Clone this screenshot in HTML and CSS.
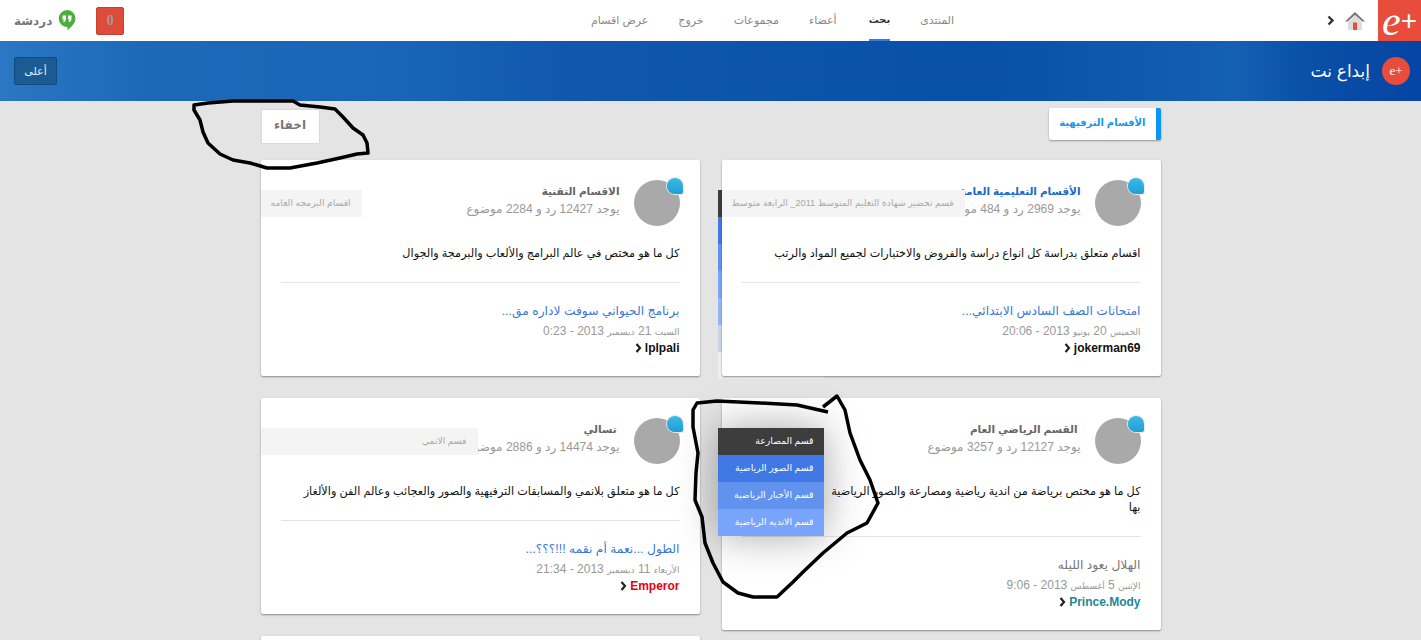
FILE: index.html
```html
<!DOCTYPE html>
<html lang="ar" dir="rtl">
<head>
  <meta charset="utf-8">
  <title>إبداع نت</title>
  <link rel="stylesheet" href="styles.css">
</head>
<body>
  <div class="topbar">
    <div class="top-start">
      <div class="logo"><span class="logo-e">e</span><span class="logo-plus">+</span></div>
      <svg class="home-icon" width="22" height="20" viewBox="0 0 22 20">
        <path d="M11 1 L21 10.5 L18.5 10.5 L11 4 L3.5 10.5 L1 10.5 Z" fill="#777"/>
        <path d="M4 10.5 L11 4.5 L18 10.5 V19 H4 Z" fill="#ddd"/>
        <rect x="9" y="11.500" width="4" height="7.500" fill="#e84c3a"/>
      </svg>
      <svg class="back-icon" width="8" height="11" viewBox="0 0 8 11">
        <path d="M1.500 1.500 L5.500 5.500 L1.500 9.500" fill="none" stroke="#333" stroke-width="2.400"/>
      </svg>
    </div>
    <nav class="nav">
      <a href="#">المنتدى</a>
      <a href="#" class="active">بحث</a>
      <a href="#">أعضاء</a>
      <a href="#">مجموعات</a>
      <a href="#">خروج</a>
      <a href="#">عرض اقسام</a>
    </nav>
    <div class="top-end">
      <div class="notify">0</div>
      <svg class="chat-icon" width="18" height="21" viewBox="0 0 18 21">
        <path d="M9 0 A8.500 8.500 0 0 1 17.500 8.500 C17.500 13.500 13 17 9.500 20.500 V17 A8.500 8.500 0 0 1 9 0 Z" fill="#4cae3c"/>
        <path d="M4.500 5.500 H8 V9.500 L6.500 12 H5 L6 9.500 H4.500 Z M10 5.500 H13.500 V9.500 L12 12 H10.500 L11.500 9.500 H10 Z" fill="#fff"/>
      </svg>
      <span class="chat-label">دردشة</span>
    </div>
  </div>

  <div class="banner">
    <div class="brand">
      <div class="brand-badge">e+</div>
      <span class="brand-name">إبداع نت</span>
    </div>
    <button class="up-btn">أعلى</button>
  </div>

  <div class="page">
    <div class="section-row">
      <div class="section-tab">الأقسام الترفيهية</div>
      <button class="hide-btn">اخفاء</button>
    </div>

    <div class="columns">
      <div class="column">
        <div class="card">
          <div class="sub-menu sub-menu-back">
            <div class="tone-0"></div>
            <div class="tone-1"></div>
            <div class="tone-2"></div>
            <div class="tone-3"></div>
            <div class="tone-4"></div>
            <div class="tone-5"></div>
            <div class="tone-6"></div>
          </div>
          <div class="sub-tab">قسم تحضير شهادة التعليم المتوسط 2011_ الرابعة متوسط</div>
          <div class="card-head">
            <div class="avatar"><span class="bubble"></span></div>
            <div>
              <h3 class="card-title title-blue">الأقسام التعليمية العامة</h3>
              <div class="card-meta">يوجد 2969 رد و 484 موضوع</div>
            </div>
          </div>
          <p class="card-desc">اقسام متعلق بدراسة كل انواع دراسة والفروض والاختبارات لجميع المواد والرتب</p>
          <div class="card-line"></div>
          <a href="#" class="last-post">امتحانات الصف السادس الابتدائي...</a>
          <div class="last-date"><span class="date-word">الخميس</span> 20 <span class="date-word">يونيو</span> 2013 - 20:06</div>
          <div class="last-author">
            <span class="author-black">jokerman69</span>
            <svg width="7" height="10" viewBox="0 0 7 10"><path d="M1.500 1 L5 5 L1.500 9" fill="none" stroke="#222" stroke-width="2.200"/></svg>
          </div>
        </div>

        <div class="card">
          <div class="sub-menu">
            <div class="tone-0">قسم المصارعة</div>
            <div class="tone-1">قسم الصور الرياضية</div>
            <div class="tone-2">قسم الأخبار الرياضية</div>
            <div class="tone-3">قسم الانديه الرياضية</div>
          </div>
          <div class="card-head">
            <div class="avatar"><span class="bubble"></span></div>
            <div>
              <h3 class="card-title">&nbsp;القسم الرياضي العام</h3>
              <div class="card-meta">يوجد 12127 رد و 3257 موضوع</div>
            </div>
          </div>
          <p class="card-desc">كل ما هو مختص برياضة من اندية رياضية ومصارعة والصور الرياضية<br>بها</p>
          <div class="card-line"></div>
          <a href="#" class="last-post post-grey">الهلال يعود الليله</a>
          <div class="last-date"><span class="date-word">الإثنين</span> 5 <span class="date-word">أغسطس</span> 2013 - 9:06</div>
          <div class="last-author">
            <span class="author-teal">Prince.Mody</span>
            <svg width="7" height="10" viewBox="0 0 7 10"><path d="M1.500 1 L5 5 L1.500 9" fill="none" stroke="#222" stroke-width="2.200"/></svg>
          </div>
        </div>
      </div>

      <div class="column">
        <div class="card">
          <div class="sub-tab">اقسام البرمجه العامه</div>
          <div class="card-head">
            <div class="avatar"><span class="bubble"></span></div>
            <div>
              <h3 class="card-title">الاقسام التقنية</h3>
              <div class="card-meta">يوجد 12427 رد و 2284 موضوع</div>
            </div>
          </div>
          <p class="card-desc">كل ما هو مختص في عالم البرامج والألعاب والبرمجة والجوال</p>
          <div class="card-line"></div>
          <a href="#" class="last-post">برنامج الحيواني سوفت لاداره مق...</a>
          <div class="last-date"><span class="date-word">السبت</span> 21 <span class="date-word">ديسمبر</span> 2013 - 0:23</div>
          <div class="last-author">
            <span class="author-black">lplpali</span>
            <svg width="7" height="10" viewBox="0 0 7 10"><path d="M1.500 1 L5 5 L1.500 9" fill="none" stroke="#222" stroke-width="2.200"/></svg>
          </div>
        </div>

        <div class="card">
          <div class="sub-tab sub-tab-wide">قسم الانمي</div>
          <div class="card-head">
            <div class="avatar"><span class="bubble"></span></div>
            <div>
              <h3 class="card-title">&nbsp;تسالي</h3>
              <div class="card-meta">يوجد 14474 رد و 2886 موضوع</div>
            </div>
          </div>
          <p class="card-desc">كل ما هو متعلق بلانمي والمسابقات الترفيهية والصور والعجائب وعالم الفن والألغاز</p>
          <div class="card-line"></div>
          <a href="#" class="last-post">الطول ...نعمة أم نقمه !!!؟؟؟...</a>
          <div class="last-date"><span class="date-word">الأربعاء</span> 11 <span class="date-word">ديسمبر</span> 2013 - 21:34</div>
          <div class="last-author">
            <span class="author-red">Emperor</span>
            <svg width="7" height="10" viewBox="0 0 7 10"><path d="M1.500 1 L5 5 L1.500 9" fill="none" stroke="#222" stroke-width="2.200"/></svg>
          </div>
        </div>

        <div class="card card-next"></div>
      </div>
    </div>
  </div>

  <!-- hand drawn marks on top of the screenshot -->
  <svg class="scribbles" width="1421" height="640" viewBox="0 0 1421 640">
    <path d="M194 105 L208 103 L233 101 L293 101 L300 105 L320 107 L335 109 L343 117 L353 128 L363 135 L367 143 L368 153 L357 154 L340 158 L317 163 L290 168 L267 168 L250 163 L233 160 L220 154 L208 143 L203 132 L200 120 L194 110 Z"/>
    <path d="M828 412 L797 405 L760 403 L717 401 L697 403 L693 410 L693 427 L698 453 L696 473 L695 500 L702 517 L705 543 L713 563 L723 582 L738 593 L753 597 L777 597 L793 582 L803 572 L823 553 L847 533 L867 523 L878 503 L870 480 L860 460 L850 433 L845 410 L837 396 L823 407"/>
  </svg>
</body>
</html>
```

FILE: styles.css
```css
* {
  box-sizing: border-box;
}

html {
  overflow: hidden;
  height: 640px;
  background-color: #e4e4e4;
}

body {
  margin: 0;
  font-family: "Liberation Sans", "DejaVu Sans", sans-serif;
  font-size: 12px;
  position: relative;
}

.topbar {
  display: flex;
  align-items: center;
  height: 41px;
  background-color: #fff;
  position: relative;
}

.top-start {
  display: flex;
  align-items: center;
}

.logo {
  display: flex;
  align-items: center;
  justify-content: center;
  width: 43px;
  height: 41px;
  background-color: #e84c3a;
  color: #fff;
  direction: ltr;
}

.logo-e {
  font-family: "Liberation Serif", serif;
  font-style: italic;
  font-size: 42px;
  line-height: 36px;
}

.logo-plus {
  font-size: 28px;
  line-height: 36px;
}

.home-icon {
  margin-right: 12px;
}

.back-icon {
  margin-right: 9px;
}

.nav {
  position: absolute;
  right: 467px;
  top: 0;
  display: flex;
  gap: 30px;
  height: 41px;
}

.nav a {
  color: #888;
  font-size: 11px;
  line-height: 40px;
  text-decoration: none;
  border-bottom: 2px solid transparent;
}

.nav a.active {
  margin-left: 2px;
  color: #333;
  font-size: 10px;
  font-weight: bold;
  border-bottom-color: #3b78e0;
}

.top-end {
  margin-right: auto;
  display: flex;
  align-items: center;
  direction: ltr;
  padding-left: 14px;
  flex-direction: row-reverse;
}

.notify {
  width: 28px;
  height: 28px;
  margin-left: 20px;
  background-color: #dd4b39;
  border: 1px solid #c9402f;
  border-radius: 2px;
  color: #a89a96;
  font-family: "Liberation Serif", serif;
  font-weight: bold;
  font-size: 14px;
  line-height: 26px;
  text-align: center;
}

.chat-icon {
  margin-left: 6px;
}

.chat-label {
  color: #777;
  font-size: 12px;
  font-weight: bold;
}

.banner {
  display: flex;
  justify-content: space-between;
  align-items: center;
  height: 60px;
  padding: 0 11px 0 14px;
  background: linear-gradient(to left, #0545a3 0%, #0a4fa8 8%, #1460b3 13%, #0850a8 31%, #1157ae 60%, #1866b5 72%, #1c69b8 90%, #2a78c4 100%);
}

.brand {
  display: flex;
  align-items: center;
  gap: 12px;
}

.brand-badge {
  width: 28px;
  height: 28px;
  border-radius: 50%;
  background-color: #e84c3a;
  color: #fff;
  font-family: "Liberation Serif", serif;
  font-size: 13px;
  line-height: 27px;
  text-align: center;
  direction: ltr;
}

.brand-name {
  color: #fff;
  font-size: 17px;
}

.up-btn {
  width: 43px;
  height: 28px;
  padding: 0;
  background-color: #1c5a94;
  border: 1px solid #164a7c;
  border-radius: 2px;
  color: #e8eef5;
  font-family: inherit;
  font-size: 11px;
}

.page {
  width: 900px;
  margin: 0 auto;
}

.section-row {
  display: flex;
  justify-content: space-between;
  align-items: flex-start;
  height: 59px;
}

.section-tab {
  margin-top: 7px;
  height: 32px;
  padding: 0 10px;
  background-color: #fff;
  border-right: 5px solid #0a96f5;
  border-radius: 2px;
  color: #1a96f0;
  font-weight: bold;
  font-size: 10px;
  line-height: 29px;
  box-shadow: 0 1px 2px rgba(0, 0, 0, 0.35);
}

.hide-btn {
  margin: 9px 0 0 1px;
  width: 57px;
  height: 33px;
  padding: 0 0 3px;
  background-color: #fff;
  border: none;
  color: #777;
  font-family: inherit;
  font-weight: bold;
  font-size: 12px;
  box-shadow: 0 0 2px rgba(0, 0, 0, 0.15);
}

.columns {
  display: flex;
  gap: 22px;
}

.column {
  flex: 1;
  display: flex;
  flex-direction: column;
  gap: 22px;
}

.card {
  position: relative;
  padding: 20px;
  background-color: #fff;
  border-radius: 2px;
  box-shadow: 0 1px 2px rgba(0, 0, 0, 0.4);
}

.card-next {
  height: 200px;
}

.card-head {
  display: flex;
  gap: 14px;
  height: 46px;
}

.avatar {
  position: relative;
  flex: none;
  width: 46px;
  height: 46px;
  border-radius: 50%;
  background-color: #a9a9a9;
}

.bubble {
  position: absolute;
  top: -2px;
  right: -3px;
  width: 16px;
  height: 16px;
  border-radius: 50% 50% 2px 50%;
  background: linear-gradient(#3cb9e8, #1f9fd4);
  box-shadow: 0 0 0 1px #e8e8e8;
}

.card-title {
  margin: 1px 0 0;
  color: #666;
  font-size: 10.5px;
  font-weight: bold;
  line-height: 20px;
  white-space: nowrap;
}

.title-blue {
  color: #1a6bc9;
}

.card-meta {
  color: #999;
  font-size: 12px;
  line-height: 16px;
  white-space: nowrap;
}

.card-desc {
  margin: 19px 0 0;
  color: #111;
  font-size: 11.250px;
  line-height: 16px;
}

.card-line {
  margin-top: 21px;
  height: 1px;
  background-color: #e4e4e4;
}

.last-post {
  display: block;
  margin-top: 18px;
  color: #3a78d8;
  font-size: 12.300px;
  line-height: 20px;
  text-decoration: none;
}

.post-grey {
  color: #777;
}

.last-date {
  margin-top: 2px;
  height: 16px;
  color: #999;
  font-size: 12px;
  line-height: 16px;
}

.date-word {
  font-size: 9px;
}

.last-author {
  display: flex;
  align-items: center;
  gap: 3px;
  margin-top: 1px;
  font-weight: bold;
  font-size: 12px;
  line-height: 16px;
}

.author-black {
  color: #111;
}

.author-red {
  color: #e8000e;
}

.author-teal {
  color: #1a8a96;
}

.sub-tab {
  position: absolute;
  top: 30px;
  left: 0;
  height: 27px;
  padding: 0 11px 0 10px;
  background-color: #f4f4f4;
  color: #aaa;
  font-size: 9.200px;
  line-height: 26px;
  white-space: nowrap;
}

.sub-tab-wide {
  width: 217px;
}

.sub-menu {
  position: absolute;
  top: 30px;
  left: -4px;
  z-index: 2;
  width: 106px;
  color: #fff;
  font-size: 9.300px;
  line-height: 26px;
  box-shadow: 0 0 40px rgba(0, 0, 0, 0.35);
}

.sub-menu div {
  height: 27px;
  padding-right: 10px;
}

.sub-menu-back {
  z-index: -1;
  box-shadow: none;
}

.tone-0 {
  background-color: #3d3d3d;
}

.tone-1 {
  background-color: #4079e5;
}

.tone-2 {
  background-color: #6092ee;
}

.tone-3 {
  background-color: #78a5fb;
}

.tone-4 {
  background-color: #93b6fb;
}

.tone-5 {
  background-color: #c9d3e6;
}

.tone-6 {
  background-color: #eeeeee;
}

.scribbles {
  position: absolute;
  top: 0;
  left: 0;
  z-index: 5;
  pointer-events: none;
}

.scribbles path {
  fill: none;
  stroke: #000;
  stroke-width: 3.500;
  stroke-linejoin: round;
}
```
